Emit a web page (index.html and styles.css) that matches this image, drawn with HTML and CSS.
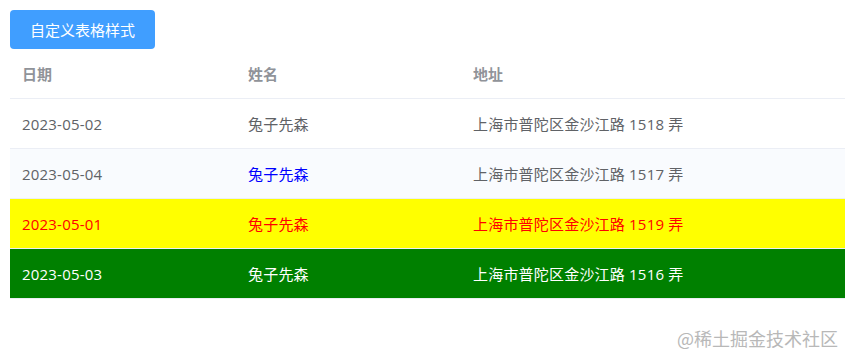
FILE: index.html
```html
<!DOCTYPE html>
<html lang="zh-CN">
<head>
<meta charset="utf-8">
<title>自定义表格样式</title>
<link rel="stylesheet" href="styles.css">
</head>
<body>
<div class="page">
  <button class="btn" type="button">自定义表格样式</button>
  <table class="table">
    <colgroup>
      <col class="c1"><col class="c2"><col>
    </colgroup>
    <thead>
      <tr><th>日期</th><th>姓名</th><th>地址</th></tr>
    </thead>
    <tbody>
      <tr><td>2023-05-02</td><td>兔子先森</td><td>上海市普陀区金沙江路 1518 弄</td></tr>
      <tr class="stripe"><td>2023-05-04</td><td class="blue">兔子先森</td><td>上海市普陀区金沙江路 1517 弄</td></tr>
      <tr class="yellow"><td>2023-05-01</td><td>兔子先森</td><td>上海市普陀区金沙江路 1519 弄</td></tr>
      <tr class="green"><td>2023-05-03</td><td>兔子先森</td><td>上海市普陀区金沙江路 1516 弄</td></tr>
    </tbody>
  </table>
</div>
<div class="watermark">@稀土掘金技术社区</div>
</body>
</html>
```
FILE: styles.css
```css
html, body {
  margin: 0;
  padding: 0;
  background: #fff;
}
body {
  font-family: "Open Sans", "Noto Sans CJK SC", sans-serif;
  font-size: 15px;
  color: #606266;
  overflow: hidden;
  height: 362px;
  position: relative;
}
.page {
  padding: 10px 0 0 10px;
}
.btn {
  display: block;
  width: 145px;
  height: 39px;
  border: none;
  border-radius: 4px;
  background: #409eff;
  color: #fff;
  font-family: inherit;
  font-size: 15px;
  padding: 0;
  cursor: pointer;
}
.table {
  width: 835px;
  border-collapse: collapse;
  table-layout: fixed;
}
.c1 { width: 226px; }
.c2 { width: 225px; }
th, td {
  text-align: left;
  padding: 0 12px;
  height: 49px;
  border-bottom: 1px solid #ebeef5;
  white-space: nowrap;
  letter-spacing: 0.2px;
}
th {
  color: #909399;
  font-weight: bold;
  letter-spacing: 0;
}
.stripe td { background: #f9fbfe; }
.blue { color: #0000ff; }
.yellow td { background: #ffff00; color: #ff0000; }
.green td { background: #008000; color: #ffffff; }
.watermark {
  position: absolute;
  right: 7px;
  bottom: 11px;
  font-size: 18px;
  color: #b8b8b8;
  font-family: "Noto Sans CJK SC", sans-serif;
}
```
